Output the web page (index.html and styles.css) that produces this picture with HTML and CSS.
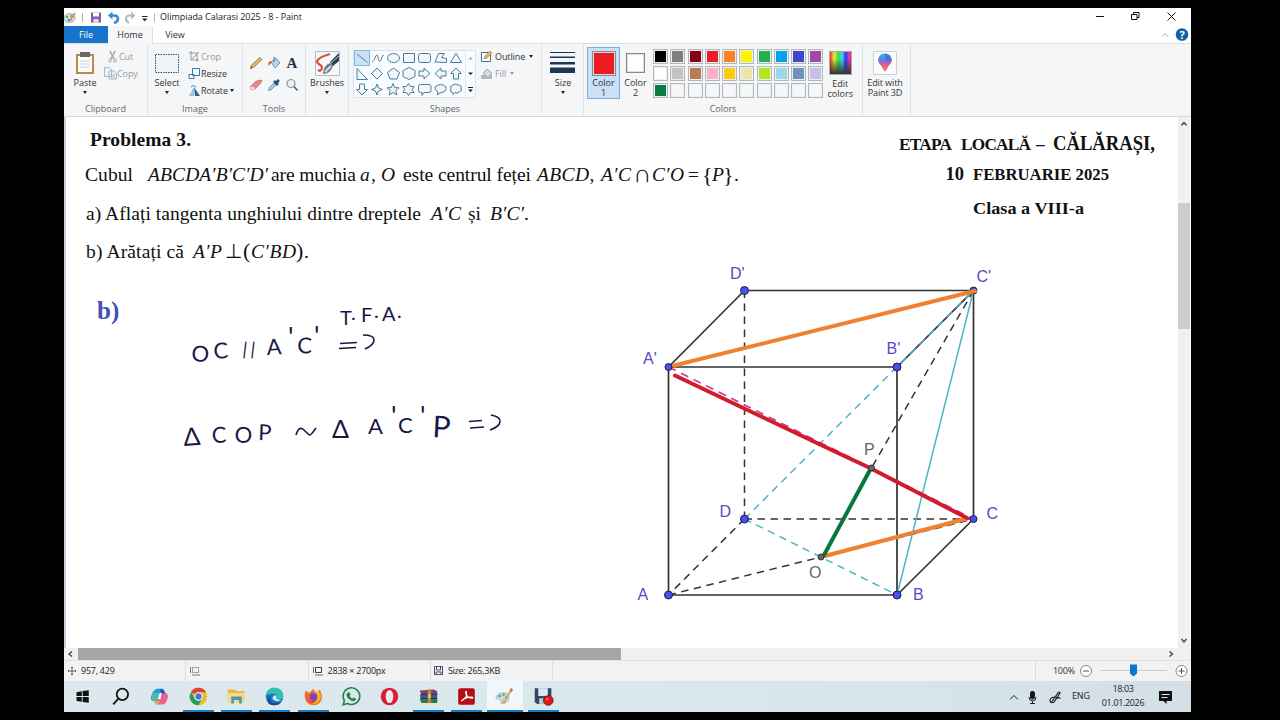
FILE: index.html
```
<!DOCTYPE html>
<html lang="ro">
<head>
    <meta charset="UTF-8">
    <title>Olimpiada Calarasi 2025 - 8 - Paint</title>
    <link rel="stylesheet" href="styles.css">
</head>
<body>
<div class="window">

    <div class="titlebar">
        <svg class="quick" width="90" height="18" viewBox="64 8 90 18">
            <ellipse cx="69.500" cy="18" rx="5.500" ry="4.300" fill="#dce9ea" stroke="#8aa9a6"/>
            <circle cx="67" cy="17" r="1.300" fill="#55a64e"/><circle cx="69" cy="20" r="1.300" fill="#3c8bd0"/><circle cx="71" cy="16" r="1.200" fill="#dd8a35"/>
            <path d="M70 21l5-8" stroke="#c98a4a" stroke-width="1.500"/>
            <path d="M82.500 13v9M154.500 13v9" stroke="#aaa"/>
            <path d="M91 12.500h10v10H91z" fill="#7d5fae"/><path d="M93 12.500h6v4h-6z" fill="#fff"/><path d="M93.500 19h5v3.500h-5z" fill="#e5def0"/>
            <path d="M110 15.500h4q4 0 4 3.500-.5 3-4 4" fill="none" stroke="#3a8bd3" stroke-width="2.500"/><path d="M112.500 11.500v8l-4.500-4z" fill="#3a8bd3"/>
            <path d="M133 15.500h-3q-4 0-4 3.500.5 3 3 4" fill="none" stroke="#b4bac2" stroke-width="2.200"/><path d="M131 11.500v8l4.500-4z" fill="#b4bac2"/>
            <path d="M142 16.500h5.500" stroke="#222"/><path d="M142 18.500h5.500l-2.700 2.700z" fill="#222"/>
        </svg>
        <span class="divider"></span>
        <span class="title">Olimpiada Calarasi 2025 - 8 - Paint</span>
        <svg class="controls" width="100" height="18" viewBox="1090 8 100 18" fill="none" stroke="#111">
            <path d="M1096 16.500h8M1131.500 14.500h5.500v5h-5.500zM1133.500 14.500v-2h5.500v5h-2M1167.500 12.500l8 8M1175.500 12.500l-8 8"/>
        </svg>
    </div>

    <div class="tabs">
        <span class="tab file">File</span>
        <span class="tab home">Home</span>
        <span class="tab">View</span>
        <svg class="help" width="34" height="18" viewBox="1156 26 34 18">
            <path d="M1162 36.500l3-3 3 3" fill="none" stroke="#aaa"/>
            <circle cx="1182" cy="34.500" r="6.300" fill="#1260a8"/>
            <text x="1182" y="38.500" text-anchor="middle" class="help-mark">?</text>
        </svg>
    </div>

    <div class="ribbon">
        <div class="group clipboard">
            <div class="group-body">
                <div class="big">
                    <svg width="24" height="26" viewBox="0 0 24 26"><path d="M3 4h18v20H3z" fill="#b78b4d"/><path d="M5 6h14v16H5z" fill="#fbfbf8"/><path d="M7 2h10v5H7z" fill="#696969"/><path d="M7 11h10M7 14h10M7 17h10" stroke="#ccd4df"/></svg>
                    <span>Paste</span><i class="arrow"></i>
                </div>
                <div class="list">
                    <div class="item off cut"><svg width="13" height="13" viewBox="0 0 13 13" fill="none" stroke="#a5a5a5"><path d="M4 1l4 8M9 1L5 9" stroke-width="1.500"/><circle cx="4" cy="10.500" r="1.500"/><circle cx="9" cy="10.500" r="1.500"/></svg>Cut</div>
                    <div class="item off"><svg width="13" height="13" viewBox="0 0 13 13" fill="#eef3f8" stroke="#a9b9cb"><path d="M.5.500h5l2 2v7h-7zM5 4h5l2.500 2.500V12H5z"/><path d="M6.500 8H11M6.500 10H11"/></svg>Copy</div>
                </div>
            </div>
            <div class="caption">Clipboard</div>
        </div>

        <div class="group image">
            <div class="group-body">
                <div class="big">
                    <svg width="26" height="26" viewBox="0 0 26 26"><path d="M1.500 4.500h23v18h-23z" fill="#edf5fb" stroke="#314f70" stroke-dasharray="1.500 1"/></svg>
                    <span>Select</span><i class="arrow"></i>
                </div>
                <div class="list">
                    <div class="item off"><svg width="13" height="13" viewBox="0 0 13 13" fill="none" stroke="#999"><path d="M3 1v9h8M1 3h8v9M3 10l8-8"/></svg>Crop</div>
                    <div class="item"><svg width="13" height="13" viewBox="0 0 13 13" fill="#f4fafe" stroke="#3b79ad"><path d="M4.500 1.500h7v7h-7zM1 7.500h5v4H1z"/></svg>Resize</div>
                    <div class="item"><svg width="13" height="13" viewBox="0 0 13 13"><path d="M1 12l5-9v9z" fill="#9bc3df"/><path d="M6 3l6 9H7z" fill="#236795"/><path d="M3 3q2-3 5 0" fill="none" stroke="#4a8bbb"/></svg>Rotate<i class="arrow"></i></div>
                </div>
            </div>
            <div class="caption">Image</div>
        </div>

        <div class="group tools">
            <div class="group-body">
                <svg width="14" height="14" viewBox="0 0 14 14"><path d="M1.500 12.500l1-3.500L11 1.500 13 3.500 5 11z" fill="#e8b765" stroke="#8d6a3f" stroke-width=".8"/><path d="M1.500 12.500l.6-1.800 1 1z" fill="#333"/></svg>
                <svg width="14" height="14" viewBox="0 0 14 14"><path d="M4 6l5-4 4 5-5 5z" fill="#b4d3ea" stroke="#5c7d98" stroke-width=".8"/><path d="M5 5Q0 5 1.500 10 3 8 4.500 7z" fill="#dd6644"/><path d="M7 1v5" stroke="#667"/></svg>
                <span class="tool-a">A</span>
                <svg width="14" height="14" viewBox="0 0 14 14"><path d="M1 9l6-6 6-1-1 3-6 6-4 1z" fill="#e58a8a" stroke="#b85b5b" stroke-width=".6"/><path d="M1 9l4 0 1 2-4 1z" fill="#f8dada"/></svg>
                <svg width="14" height="14" viewBox="0 0 14 14"><path d="M1.500 12.500l1-3 5-5 2 2-5 5z" fill="#9dcbea" stroke="#56778f" stroke-width=".7"/><path d="M7 3l4 4M9 5l3-3" stroke="#254d77" stroke-width="2.600"/></svg>
                <svg width="14" height="14" viewBox="0 0 14 14"><circle cx="6" cy="5.500" r="4" fill="#e6f1f8" stroke="#8d989f" stroke-width="1.200"/><path d="M9 8.500l3.500 4" stroke="#765e50" stroke-width="1.800"/></svg>
            </div>
            <div class="caption">Tools</div>
        </div>

        <div class="group brushes">
            <div class="group-body">
                <div class="big">
                    <svg width="26" height="26" viewBox="0 0 26 26"><path d="M1.500 1.500h24v24h-24z" fill="#f5f9fb" stroke="#b6bdc4"/><path d="M16 4Q5 7 3 11c-1 3 6 4 5 7q-1 4-4 2" fill="none" stroke="#da5434" stroke-width="2.200"/><path d="M9 24q0-8 7-11l3 3q-2 7-10 8z" fill="#6a7782"/><path d="M11 22l6-6" stroke="#d8e1e7" stroke-width="2"/><path d="M16 12l9-9v8l-6 5z" fill="#2c3f50"/><path d="M17 13l8-7" stroke="#bcc8d0"/></svg>
                    <span>Brushes</span><i class="arrow"></i>
                </div>
            </div>
        </div>

        <div class="group shapes">
            <div class="group-body">
                <svg class="gallery" width="124" height="50" viewBox="353 49 124 50">
                    <path d="M353.500 50.500h122v47h-122z" fill="#fafdff" stroke="#dce1e5"/>
                    <path d="M465.500 50v48" stroke="#e3e7eb"/>
                    <path d="M354.500 50.500h15v15h-15z" fill="#c9e0f7" stroke="#86b5e2"/>
                    <g fill="#eef8fd" stroke="#4f7b99">
                        <path d="M357 54l10.500 8.500"/>
                        <path d="M372 62c3-.5 3-7 5-7s0 7 3 6c2-1 1-5 4-6" fill="none"/>
                        <ellipse cx="393.500" cy="58" rx="6" ry="4.500"/>
                        <path d="M403.500 53.500h11v9h-11z"/>
                        <rect x="418.500" y="53.500" width="12" height="9" rx="2"/>
                        <path d="M435 62l3.500-8.500h6l-3 4 5 1v4z"/>
                        <path d="M450.500 62.500l5.500-9 5.500 9z"/>
                        <path d="M357 68.500v11h10.500z"/>
                        <path d="M377 68l5.500 5.500-5.500 5.500-5.500-5.500z"/>
                        <path d="M393.500 68l6 4.500-2.500 6.500h-7l-2.500-6.500z"/>
                        <path d="M409 67.500l6 3v6l-6 3-6-3v-6z"/>
                        <path d="M419 71h5v-3l6 5.500-6 5.500v-3h-5z"/>
                        <path d="M446 71h-5v-3l-6 5.500 6 5.500v-3h5z"/>
                        <path d="M456 68l5.500 5.500h-3v5.500h-5v-5.500h-3z"/>
                        <path d="M359.500 84h5v5.500h3l-5.500 5.500-5.500-5.500h3z"/>
                        <path d="M377 84l1.500 4 4 1.500-4 1.500-1.500 4-1.500-4-4-1.500 4-1.500z"/>
                        <path d="M393 83.500l1.700 4.200h4.300l-3.300 2.800 1.200 4.500-3.900-2.500-3.900 2.500 1.200-4.500-3.300-2.800h4.300z"/>
                        <path d="M408.500 83.500l2 3h3.500l-1.700 3 1.700 3h-3.500l-2 3-2-3h-3.500l1.700-3-1.700-3h3.500z"/>
                        <path d="M420.500 84.500h8.500q2 0 2 2v4q0 2-2 2h-5l-2 3v-3h-1.500q-2 0-2-2v-4q0-2 2-2z"/>
                        <path d="M438 92q-4-2-3-5 6-5 11 0 1 5-5 5.500l-4 2.500z"/>
                        <path d="M453 93q-4-1-2-4-2-3 2-4 3-2 5 0 4 0 3 3 2 3-2 4-2 2-4 .500l-2 2z"/>
                    </g>
                    <path d="M468 59.500h5l-2.500-2.500z" fill="#aaa"/><path d="M468 72.500h5l-2.500 2.500zM468 89.500h5l-2.500 2.500z" fill="#222"/><path d="M468 87.500h5" stroke="#222"/>
                </svg>
                <div class="list">
                    <div class="item"><svg width="13" height="13" viewBox="0 0 13 13"><path d="M1.500 2.500h9v9h-9z" fill="#fff" stroke="#426d91"/><path d="M4 9l1-3 5-5 2 2-5 5z" fill="#e8b351" stroke="#9c7538" stroke-width=".6"/></svg>Outline<i class="arrow"></i></div>
                    <div class="item off"><svg width="13" height="13" viewBox="0 0 13 13"><path d="M1 8h11v4H1z" fill="#aeb7c2"/><path d="M3 6l4-4 5 4-4 5z" fill="#d7dce3" stroke="#9fa9b7"/></svg>Fill<i class="arrow"></i></div>
                </div>
            </div>
            <div class="caption">Shapes</div>
        </div>

        <div class="group size">
            <div class="group-body">
                <div class="big">
                    <svg width="26" height="26" viewBox="0 0 26 26" fill="#1f3558"><path d="M0 2h25v1H0zM0 6.500h25v1.500H0zM0 12h25v2.500H0zM0 17.500h25v5.500H0z"/></svg>
                    <span>Size</span><i class="arrow"></i>
                </div>
            </div>
        </div>

        <div class="group colors">
            <div class="group-body">
                <div class="big picked"><b class="swatch red"></b><span>Color</span><span>1</span></div>
                <div class="big second"><b class="swatch white"></b><span>Color</span><span>2</span></div>
                <div class="palette">
                    <b class="black"></b><b class="gray"></b><b class="maroon"></b><b class="red"></b><b class="orange"></b><b class="yellow"></b><b class="green"></b><b class="turquoise"></b><b class="indigo"></b><b class="purple"></b>
                    <b class="white"></b><b class="silver"></b><b class="brown"></b><b class="rose"></b><b class="gold"></b><b class="cream"></b><b class="lime"></b><b class="sky"></b><b class="steel"></b><b class="lavender"></b>
                    <b class="forest"></b><b></b><b></b><b></b><b></b><b></b><b></b><b></b><b></b><b></b>
                </div>
                <div class="big edit"><b class="rainbow"></b><span>Edit</span><span>colors</span></div>
            </div>
            <div class="caption">Colors</div>
        </div>

        <div class="group paint3d">
            <div class="group-body">
                <div class="big">
                    <svg width="26" height="26" viewBox="0 0 26 26">
                        <defs><linearGradient id="drop" x1="0" y1="0" x2="0" y2="1"><stop offset="0" stop-color="#20b6ec"/><stop offset=".4" stop-color="#6f75dd"/><stop offset=".65" stop-color="#e85c8a"/><stop offset="1" stop-color="#f08a3c"/></linearGradient></defs>
                        <path d="M1.500 1.500h23v23h-23z" fill="#fbfcfd" stroke="#ccd0d4"/>
                        <path d="M13 3.500a6.500 6.500 0 0 1 5 11c-3 2-2 5-5 7-3-2-2-5-5-7a6.500 6.500 0 0 1 5-11z" fill="url(#drop)"/>
                        <path d="M13 4a6 6 0 0 1 6 7l-5 1z" fill="#4a61d3" opacity=".7"/>
                    </svg>
                    <span>Edit with</span><span>Paint 3D</span>
                </div>
            </div>
        </div>
    </div>

    <div class="workspace">
        <!-- the drawing, in screen coordinates -->
        <svg class="canvas" width="1112" height="531" viewBox="66 117 1112 531">
            <g class="statement">
                <text x="90" y="145.500" class="bold" textLength="101">Problema 3.</text>
                <text x="85" y="181" textLength="48">Cubul</text>
                <text x="148" y="181" class="it" textLength="120">ABCDA′B′C′D′</text>
                <text x="271" y="181" textLength="85">are muchia</text>
                <text x="360" y="181" class="it">a</text>
                <text x="371" y="181">,</text>
                <text x="381" y="181" class="it">O</text>
                <text x="403" y="181" textLength="128">este centrul feței</text>
                <text x="537" y="181" class="it" textLength="52">ABCD</text>
                <text x="589.500" y="181">,</text>
                <text x="601" y="180.500" class="it" textLength="30">A′C</text>
                <text x="633" y="181.500" class="cap">∩</text>
                <text x="652" y="180.500" class="it" textLength="32">C′O</text>
                <text x="688" y="181">=</text>
                <text x="702" y="181.500" class="brace">{</text>
                <text x="712" y="180.500" class="it">P</text>
                <text x="723" y="181.500" class="brace">}</text>
                <text x="734" y="181">.</text>

                <text x="86" y="220" textLength="335">a) Aflați tangenta unghiului dintre dreptele</text>
                <text x="431" y="220" class="it" textLength="30">A′C</text>
                <text x="468" y="220">și</text>
                <text x="490" y="220" class="it" textLength="34">B′C′</text>
                <text x="524" y="220">.</text>

                <text x="86" y="257.500" textLength="98">b) Arătați că</text>
                <text x="193" y="257.500" class="it" textLength="29">A′P</text>
                <text x="225" y="257.500" textLength="14">⊥</text>
                <text x="243" y="258" class="brace">(</text>
                <text x="251" y="257.500" class="it" textLength="45">C′BD</text>
                <text x="296" y="258" class="brace">)</text>
                <text x="304" y="257.500">.</text>
            </g>

            <g class="heading">
                <text x="899" y="149.500" textLength="53">ETAPA</text>
                <text x="961" y="149.500" textLength="70">LOCALĂ</text>
                <text x="1036" y="149.500">–</text>
                <text x="1053" y="149.500" class="city" textLength="102" lengthAdjust="spacingAndGlyphs">CĂLĂRAȘI,</text>
                <text x="945.500" y="180" class="day">10</text>
                <text x="973" y="180" textLength="136" lengthAdjust="spacingAndGlyphs">FEBRUARIE 2025</text>
                <text x="973" y="214" textLength="111" lengthAdjust="spacingAndGlyphs">Clasa a VIII-a</text>
            </g>

            <text x="97" y="318.500" class="part">b)</text>

            <g class="hand">
                <text x="191 214" y="361 359" rotate="4 -4">OC</text>
                <text x="242 250" y="355" class="bars" rotate="7">||</text>
                <text x="267" y="355" rotate="-3">A</text>
                <text x="288" y="347" class="prime">'</text>
                <text x="297" y="353" rotate="2">C</text>
                <text x="314" y="346" class="prime">'</text>
                <text x="340 351 361 374 382 397" y="325 320 322 318 321 318" class="small">T.F.A.</text>
                <path d="M340 343.500l17-1M339 348.500l17-1M363 335q11 0 11 5t-9 9"/>
                <text x="184" y="446" class="delta" rotate="-4">Δ</text>
                <text x="212 234 258" y="443 442 440" rotate="-2 5 2">COP</text>
                <path d="M296 435q3-10 8-5t6 5 6-7"/>
                <text x="332" y="438" class="delta">Δ</text>
                <text x="368" y="434">A</text>
                <text x="391" y="426" class="prime">'</text>
                <text x="398" y="433">C</text>
                <text x="420" y="426" class="prime">'</text>
                <text x="432" y="437" class="tall" rotate="3">P</text>
                <path d="M469 421.500l13-1M470 428l14-1M491 415q10 2 9 7t-10 8"/>
            </g>

            <!-- cube edges -->
            <g class="edges">
                <path d="M668.500 595H897V367H668.500zM668.500 367l76-76.500h229L897 367M973.500 290.500V519L897 595"/>
                <path class="dashed" d="M744.500 290.500V519M744.500 519h229M744.500 519l-76 76M668.500 595L821 557M821 557l152.500-38M973.500 290.500L871.500 468"/>
            </g>
            <g class="section">
                <path d="M973.500 290.500L897 595"/>
                <path class="dashed" d="M744.500 519L973.500 290.500M744.500 519L897 595"/>
            </g>
            <path class="diagonal" d="M668.500 367L973.500 519"/>
            <g class="dots">
                <circle cx="668.500" cy="595" r="4"/><circle cx="897" cy="595" r="4"/><circle cx="973.500" cy="519" r="3.500"/><circle cx="744.500" cy="519" r="4"/>
                <circle cx="668.500" cy="367" r="3.500"/><circle cx="897" cy="367" r="4"/><circle cx="973.500" cy="290.500" r="3.500"/><circle cx="744.500" cy="290.500" r="4"/>
            </g>
            <g class="marker">
                <path d="M674 365.500L975 291M823 556.500l144-38" stroke="#ee8232"/>
                <path d="M675 375.500l145 69 50 23.500 97 50" stroke="#d01c2e"/>
                <path d="M870 470L824 555" stroke="#08773f"/>
            </g>
            <g class="dots inner"><circle cx="821" cy="557" r="3"/><circle cx="871.500" cy="468" r="3"/></g>
            <g class="labels">
                <text x="730" y="279">D'</text><text x="976.500" y="282">C'</text><text x="643" y="364">A'</text><text x="886.500" y="354">B'</text>
                <text x="719.500" y="517">D</text><text x="986.500" y="519">C</text><text x="637.500" y="600">A</text><text x="913" y="600">B</text>
                <text x="864" y="455" class="plain">P</text><text x="809" y="577.500" class="plain">O</text>
            </g>
        </svg>
        <div class="vscroll">
            <svg width="12" height="14" viewBox="0 0 12 14"><path d="M3.500 8.500l2.500-3 2.500 3" class="chevron"/></svg>
            <div class="thumb"></div>
            <svg width="12" height="14" viewBox="0 0 12 14"><path d="M3.500 5l2.500 3 2.500-3" class="chevron"/></svg>
        </div>
    </div>

    <div class="hscroll">
        <svg width="14" height="12" viewBox="0 0 14 12"><path d="M8 3.500l-3 2.500 3 2.500" class="chevron"/></svg>
        <div class="thumb"></div>
        <svg class="right" width="14" height="12" viewBox="0 0 14 12"><path d="M5.500 3.500l3 2.500-3 2.500" class="chevron"/></svg>
    </div>

    <div class="status">
        <div class="cell"><svg width="10" height="10" viewBox="0 0 10 10"><path d="M5 1v8M1 5h8M4 2l1-1 1 1M4 8l1 1 1-1M2 4L1 5l1 1M8 4l1 1-1 1" fill="none" stroke="#444" stroke-width=".8"/></svg>957, 429</div>
        <div class="cell"><svg width="12" height="10" viewBox="0 0 12 10" fill="none" stroke="#555"><path d="M3.500 1.500h6v5h-6z" stroke-dasharray="1 1"/><path d="M1.500 1v6M3 9h8" stroke-width=".8"/></svg></div>
        <div class="cell"><svg width="12" height="10" viewBox="0 0 12 10" fill="none" stroke="#444"><path d="M3.500 1.500h6v5h-6z"/><path d="M1.500 1v6M3 9h8" stroke-width=".8"/></svg>2838 × 2700px</div>
        <div class="cell"><svg width="10" height="10" viewBox="0 0 10 10" fill="none" stroke="#456"><path d="M.5.500h8v8h-8zM2.500 1v3h4V1M2 8.500V6h5v2.500"/></svg>Size: 265,3KB</div>
        <div class="zoom">
            <span>100%</span>
            <svg width="116" height="20" viewBox="1075 661 116 20" fill="none" stroke="#555">
                <path d="M1100 670.500h67" stroke="#ccc"/><path d="M1130 664.500h7v9l-3.500 3-3.500-3z" fill="#0a78d0" stroke="none"/>
                <circle cx="1086" cy="671" r="5.500" fill="#fff" stroke="#888"/><path d="M1083 671h6"/>
                <circle cx="1181.500" cy="671" r="5.500" fill="#fff" stroke="#888"/><path d="M1178.500 671h6M1181.500 668v6"/>
            </svg>
        </div>
    </div>

    <div class="taskbar">
        <div class="app"><svg viewBox="0 0 24 24" fill="#111"><path d="M4 7l6-1v5.500H4zM11 5.800l7-1v6.700h-7zM4 12.500h6V18l-6-1zM11 12.500h7v6.700l-7-1z"/></svg></div>
        <div class="app"><svg viewBox="0 0 24 24" fill="none" stroke="#111" stroke-width="2"><circle cx="13" cy="9.500" r="6.500"/><path d="M8.500 14.500L2.500 21"/></svg></div>
        <div class="app"><svg viewBox="0 0 24 24"><path d="M9 3h6q2 0 3 4l1 2h-6l-2 8H4q-3-1-1-7 2-6 6-7z" fill="#249bd1"/><path d="M4 8h8l-3 9H5q-4-1-1-9z" fill="#55b8a0"/><path d="M14 8h5q4 1 2 7-2 6-6 6H9q-2 0-3-4h5z" fill="#eb6488"/><path d="M13 3q4 0 5 5h2q-5 0-6 4z" fill="#304bc8"/><path d="M6 17h6l-2 4q-3 0-4-4z" fill="#efa541"/><path d="M10 15l2-7h3l-2 7z" fill="#eff3fa"/></svg></div>
        <div class="app open"><svg viewBox="0 0 24 24"><circle cx="12" cy="12" r="10" fill="#e9bd2b"/><path d="M12 12L3.300 7A10 10 0 0 1 20.700 7H12z" fill="#de4438"/><path d="M3.300 7A10 10 0 0 0 12 22l4-7.500-8-.3z" fill="#24a15c"/><circle cx="12" cy="12" r="4.800" fill="#fff"/><circle cx="12" cy="12" r="3.600" fill="#3d79dd"/></svg></div>
        <div class="app open"><svg viewBox="0 0 24 24"><path d="M2 4h8l2 2h9v12H2z" fill="#e9b53e"/><path d="M2 8h19v11H2z" fill="#fbd978"/><path d="M6 20v-8h12v8h-3v-4H9v4z" fill="#4a94c4"/></svg></div>
        <div class="app open"><svg viewBox="0 0 24 24"><circle cx="12" cy="12" r="10" fill="#1678c5"/><path d="M2 11c1-12 19-12 20 0 0 5-5 6-8 3 3-4-3-8-12-3z" fill="#35bfae"/><path d="M8 11c-3 8 4 11 12 7-4 6-15 5-16-1q0-4 4-6z" fill="#104e97"/><path d="M11 11q4-2 3 3 1 2 6 2-5 3-10-1-1-2 1-4z" fill="#dce8ef"/></svg></div>
        <div class="app open"><svg viewBox="0 0 24 24"><path d="M3 5l4 3 5-5 2 4h3l2-3q4 7 2 12c-3 8-15 8-18 0q-2-5 0-11z" fill="#f26b2d"/><path d="M14 5q8 2 6 9-3 8-11 7 11-3 5-16z" fill="#f6b72e"/><circle cx="12" cy="12.500" r="4.300" fill="#7a45b8"/><path d="M3 12q4 9 13 3-5 8-12 1z" fill="#e83b5f"/></svg></div>
        <div class="app"><svg viewBox="0 0 24 24" fill="none" stroke="#24804f" stroke-width="1.800"><path d="M2.500 21.500l1.300-5A9.500 9.500 0 1 1 7.500 20z"/><path d="M9 7l1.500 3-1 1.500q1 2.500 3.500 3.500l1.500-1.500 2.500 1.500q-2 3-5 1.500-5-2-5.500-7z" fill="#24804f" stroke-width=".8"/></svg></div>
        <div class="app"><svg viewBox="0 0 24 24"><ellipse cx="12" cy="12" rx="10" ry="10" fill="#d91f35"/><ellipse cx="12" cy="12" rx="4.300" ry="7.500" fill="#e6edf1"/></svg></div>
        <div class="app open"><svg viewBox="0 0 24 24"><path d="M2 5l16-1 4 2v4H4z" fill="#883c70"/><path d="M2 10h20v5H3z" fill="#315da8"/><path d="M2 15h20v4.500H4z" fill="#34783d"/><path d="M3 9.500h19M3 14.500h19" stroke="#222"/><path d="M11 4h4v15.500h-4z" fill="#b48734"/><path d="M12 9h2v5h-2z" fill="#eadaa5"/></svg></div>
        <div class="app open"><svg viewBox="0 0 24 24"><rect x="2.500" y="2.500" width="19" height="19" rx="2.500" fill="#b30e15"/><path d="M6 17q7-3 6-10-1-2-1 1 2 6 8 6 1-2-5-1-5 1-8 4z" fill="none" stroke="#fff" stroke-width="1.300"/></svg></div>
        <div class="app open active"><svg viewBox="0 0 24 24"><path d="M2 14Q4 6 14 8q5 3 2 9-4 4-8 3l1-3q-4-2-7-3z" fill="#c9dde0" stroke="#8da6aa" stroke-width=".7"/><circle cx="6.500" cy="11.500" r="1.400" fill="#458fc5"/><circle cx="11" cy="10" r="1.400" fill="#57a54f"/><circle cx="14" cy="13" r="1.400" fill="#d25349"/><circle cx="11" cy="17" r="1.300" fill="#e4b739"/><path d="M11 20l8-15" stroke="#d4a675" stroke-width="2"/><path d="M18 6l1-4 3 2-3 4z" fill="#c3804a"/></svg></div>
        <div class="app open"><svg viewBox="0 0 24 24"><path d="M2 2.500h19v18H5l-3-2z" fill="#34475c"/><path d="M6 2.500h11v9H6z" fill="#d7e9f3"/><path d="M7 14h8v6.500H7z" fill="#b8cbd8"/><circle cx="17.500" cy="16.500" r="5.500" fill="#df1717" stroke="#760c0c"/><circle cx="16" cy="15" r="1.300" fill="#ff7a68"/></svg></div>
        <div class="tray">
            <svg width="60" height="20" viewBox="1006 686 60 20" fill="none" stroke="#222">
                <path d="M1012 698.500l4-4 4 4"/>
                <rect x="1032.500" y="690.500" width="4" height="7.500" rx="1.500" fill="#111"/><path d="M1031 696q0 4 3.500 4t3.500-4M1034.500 700v2.500M1032 702.500h5"/>
                <path d="M1053 702l7-10q2-2 2 0l-6 9q-4 2-4-2 1-3 5-3l4 1M1058 698q4-3 4 0" stroke-width="1.200"/>
            </svg>
            <span class="lang">ENG</span>
            <span class="clock">18:03<br>01.01.2026</span>
            <svg width="16" height="16" viewBox="0 0 16 16"><path d="M2 2h13v10H9.500v3l-3-3H2z" fill="#111"/><path d="M4.500 5.500h8M4.500 8.500h6" stroke="#dce6eb"/></svg>
        </div>
    </div>
</div>
</body>
</html>
```
FILE: styles.css
```
body {
    margin: 0;
    background: #000;
    font-family: "Open Sans", "Noto Sans", sans-serif;
    font-size: 9px;
    line-height: 10px;
    color: #333;
    overflow: hidden;
}
svg {
    display: block;
    flex: none;
}
.window {
    width: 1127px;
    height: 704px;
    margin: 8px 0 0 64px;
    background: #fff;
    display: flex;
    flex-direction: column;
}

/* title bar and tabs */
.titlebar {
    height: 18px;
    display: flex;
    align-items: center;
}
.divider {
    width: 1px;
    height: 9px;
    background: #bbb;
}
.title {
    margin-left: 5px;
    color: #222;
    letter-spacing: -0.04px;
}
.controls, .help {
    margin-left: auto;
    margin-right: 1px;
}
.tabs {
    height: 18px;
    display: flex;
    box-sizing: border-box;
    border-bottom: 1px solid #dcdfe2;
}
.tab {
    width: 44px;
    line-height: 18px;
    text-align: center;
}
.file {
    background: #1874cb;
    color: #fff;
}
.home {
    background: #f5f7f8;
    border-right: 1px solid #dcdfe2;
    height: 18px;
}
.help-mark {
    font-size: 11px;
    font-weight: bold;
    fill: #fff;
}

/* ribbon */
.ribbon {
    height: 73px;
    box-sizing: border-box;
    background: #f4f6f8;
    border-bottom: 1px solid #d5d8dc;
    display: flex;
    flex: none;
}
.group {
    box-sizing: border-box;
    border-right: 1px solid #e2e5e8;
    height: 71px;
    display: flex;
    flex-direction: column;
}
.group-body {
    height: 60px;
    display: flex;
}
.caption {
    text-align: center;
    color: #666;
    line-height: 10px;
}
.clipboard { width: 84px; }
.image { width: 95px; }
.tools { width: 63px; }
.brushes { width: 43px; }
.shapes { width: 193px; }
.size { width: 42px; }
.colors { width: 279px; }
.paint3d { width: 48px; }

.big {
    width: 42px;
    padding-top: 6px;
    display: flex;
    flex-direction: column;
    align-items: center;
    text-align: center;
    white-space: nowrap;
    flex: none;
}
.big span {
    margin-top: 2px;
}
.big span + span {
    margin-top: 0;
}
.arrow {
    border: 2.5px solid transparent;
    border-top: 3px solid #222;
    border-bottom: 0;
}
.big .arrow {
    margin-top: 3px;
}
.item .arrow {
    margin-left: 2px;
}
.list {
    padding-top: 4px;
}
.item {
    height: 17px;
    display: flex;
    align-items: center;
    letter-spacing: -0.1px;
}
.off {
    color: #999;
}
.off .arrow {
    border-top-color: #999;
}
.clipboard .list { margin-left: -2px; }
.cut { padding-left: 2px; }
.image .big { margin-left: -2px; }
.tools .group-body {
    display: grid;
    grid-template-columns: 18px 18px 18px;
    grid-auto-rows: 22px;
    padding: 8px 0 0 4px;
    box-sizing: border-box;
    place-items: center;
}
.tool-a {
    font: bold 15px "Liberation Serif", serif;
    color: #1f3548;
}
.gallery {
    margin: 5px 3px 0 4px;
}
.shapes .item {
    gap: 2px;
}

.colors .big {
    box-sizing: border-box;
}
.colors .picked {
    width: 33px;
    height: 52px;
    margin: 3px 0 0 3px;
    padding-top: 3px;
    background: #c9e0f7;
    border: 1px solid #7daedb;
}
.swatch {
    box-sizing: border-box;
    width: 24px;
    height: 25px;
    border: 1px solid #888;
    outline: 1px solid #ddd;
    outline-offset: -2px;
}
.colors .second {
    width: 33px;
    padding-top: 9px;
    margin-left: -1px;
}
.second .swatch {
    width: 19px;
    height: 20px;
    margin-bottom: 3px;
}
.palette {
    display: grid;
    grid-template-columns: repeat(10, 15px);
    grid-auto-rows: 15px;
    gap: 2px 2.25px;
    margin: 5px 0 0 1px;
}
.palette b {
    box-sizing: border-box;
    border: 1px solid #b5b8bb;
    box-shadow: inset 0 0 0 1px #eceff1;
}
.colors .edit {
    width: 32px;
    margin-left: 1px;
}
.rainbow {
    width: 21px;
    height: 22px;
    margin: 1px 0 2px;
    border: 1px solid #aaa;
    background: linear-gradient(transparent 30%, #333), linear-gradient(90deg, #e33, #ee3 20%, #3d4 40%, #3de 58%, #33e 75%, #d3d 90%, #e33);
}
.paint3d .big {
    margin-left: 1px;
}
.paint3d span {
    letter-spacing: -0.1px;
}
.black { background: #000; }
.gray { background: #7f7f7f; }
.maroon { background: #880015; }
.red { background: #ed1c24; }
.orange { background: #ff7f27; }
.yellow { background: #fff200; }
.green { background: #22b14c; }
.turquoise { background: #00a2e8; }
.indigo { background: #3f48cc; }
.purple { background: #a349a4; }
.white { background: #fff; }
.silver { background: #c3c3c3; }
.brown { background: #b97a57; }
.rose { background: #ffaec9; }
.gold { background: #ffc90e; }
.cream { background: #efe4b0; }
.lime { background: #b5e61d; }
.sky { background: #99d9ea; }
.steel { background: #7092be; }
.lavender { background: #c8bfe7; }
.forest { background: #087c42; }

/* drawing */
.workspace {
    height: 531px;
    flex: none;
    display: flex;
    border-left: 2px solid #c8d0e2;
}
.statement, .heading {
    font-family: "Liberation Serif", serif;
    font-size: 19.5px;
    fill: #111;
}
.it { font-style: italic; }
.bold { font-weight: bold; }
.brace { font-size: 22px; }
.cap { font-size: 25px; }
.heading {
    font-size: 17.3px;
    font-weight: bold;
}
.city { font-size: 20px; }
.day { font-size: 18.5px; }
.part {
    font: bold 25px "Liberation Serif", serif;
    fill: #4450b8;
}
.hand {
    font-family: Lato, sans-serif;
    font-size: 22px;
    fill: #1c1747;
}
.hand path {
    fill: none;
    stroke: #1c1747;
    stroke-width: 1.6;
}
.bars { font-size: 18px; }
.small { font-size: 20px; }
.prime { font-size: 27px; }
.delta { font-size: 25px; }
.tall { font-size: 30px; }
.edges, .section {
    fill: none;
    stroke: #333;
    stroke-width: 1.7;
}
.dashed {
    stroke-width: 1.5;
    stroke-dasharray: 7.5 5.5;
}
.section {
    stroke: #4fb3c8;
    stroke-width: 1.5;
}
.diagonal {
    stroke: #d23a9b;
    stroke-width: 1.8;
    stroke-dasharray: 8 6;
}
.dots {
    fill: #4d4dee;
    stroke: #1c1c50;
}
.inner {
    fill: #666;
    stroke: #333;
}
.marker {
    fill: none;
    stroke-width: 4;
    stroke-linecap: round;
    stroke-linejoin: round;
}
.labels {
    font: 16px "Liberation Sans", sans-serif;
    fill: #564bc4;
}
.labels .plain { fill: #666; }

/* scrollbars */
.chevron {
    fill: none;
    stroke: #444;
    stroke-width: 1.4;
}
.vscroll {
    width: 12px;
    background: #f0f0f0;
    display: flex;
    flex-direction: column;
    justify-content: space-between;
}
.vscroll .thumb {
    height: 126px;
    margin: 72px 0 auto;
    background: #cdcdcd;
}
.hscroll {
    height: 12px;
    flex: none;
    display: flex;
    background: #f0f0f0;
}
.hscroll .thumb {
    width: 543px;
    background: #a6a6a6;
}
.hscroll .right {
    margin: 0 13px 0 auto;
}

/* status bar */
.status {
    height: 21px;
    flex: none;
    display: flex;
    background: #f2f2f2;
    border-top: 1px solid #e3e3e3;
    box-sizing: border-box;
}
.cell {
    box-sizing: border-box;
    width: 122.3px;
    padding-left: 3px;
    display: flex;
    align-items: center;
    gap: 4px;
    border-right: 1px solid #dcdcdc;
    letter-spacing: -0.25px;
    color: #222;
}
.zoom {
    margin-left: auto;
    width: 155px;
    display: flex;
    align-items: center;
    justify-content: flex-end;
    border-left: 1px solid #dcdcdc;
    letter-spacing: -0.2px;
}

/* taskbar */
.taskbar {
    height: 31px;
    flex: none;
    display: flex;
    background: linear-gradient(90deg, #dce8ec, #d9e7ec 60%, #d3dfe5);
}
.app {
    width: 38.35px;
    display: flex;
    flex-direction: column;
    align-items: center;
    flex: none;
}
.app svg {
    width: 21px;
    height: 21px;
    margin-top: 5px;
}
.open::after {
    content: "";
    width: 31px;
    height: 2px;
    margin-top: auto;
    background: #1979c3;
}
.active {
    background: #f0f6f9;
    width: 36.35px;
    margin: 0 1px;
}
.active::after {
    width: 100%;
}
.tray {
    margin-left: auto;
    display: flex;
    align-items: center;
    color: #222;
    padding-right: 18px;
}
.lang {
    width: 26px;
    margin: -2px 0 0 8px;
    letter-spacing: -0.2px;
}
.clock {
    width: 44px;
    margin: -2px 12px 0 3px;
    text-align: center;
    line-height: 13.5px;
    letter-spacing: -0.35px;
}
```
